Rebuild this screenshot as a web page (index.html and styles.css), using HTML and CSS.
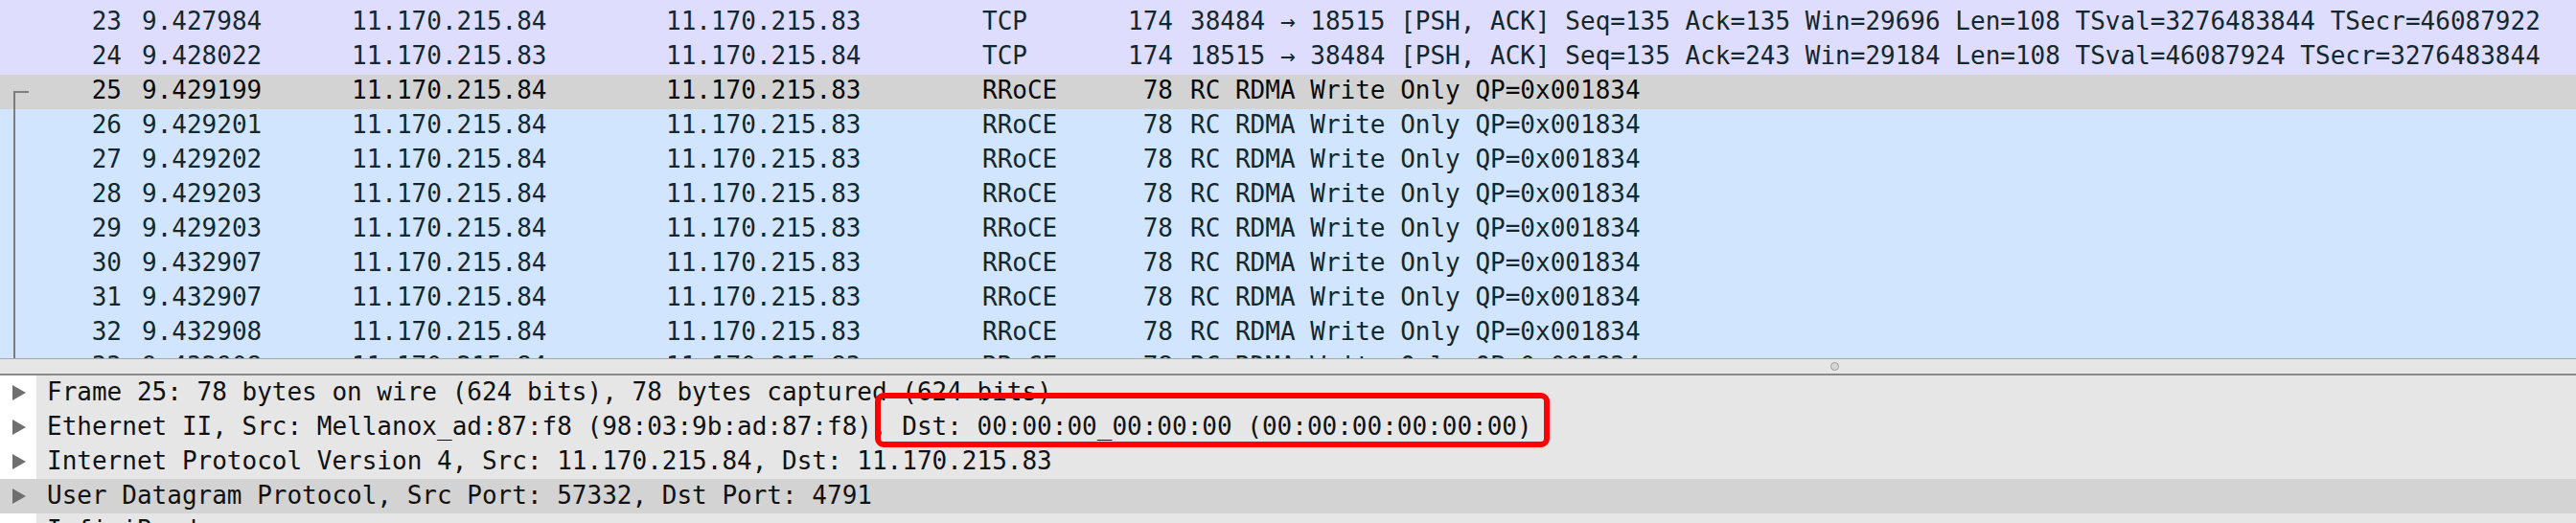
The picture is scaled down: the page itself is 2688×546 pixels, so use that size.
FILE: index.html
```html
<!DOCTYPE html>
<html>
<head>
<meta charset="utf-8">
<link rel="stylesheet" href="styles.css">
</head>
<body>
<div class="app">
  <div class="packet-list">
    <div class="tree-line"></div>
    <div class="row tcp spacer"></div>
    <div class="row tcp"><span class="c-no">23</span><span class="c-time">9.427984</span><span class="c-src">11.170.215.84</span><span class="c-dst">11.170.215.83</span><span class="c-proto">TCP</span><span class="c-len">174</span><span class="c-info">38484 → 18515 [PSH, ACK] Seq=135 Ack=135 Win=29696 Len=108 TSval=3276483844 TSecr=46087922</span></div>
    <div class="row tcp"><span class="c-no">24</span><span class="c-time">9.428022</span><span class="c-src">11.170.215.83</span><span class="c-dst">11.170.215.84</span><span class="c-proto">TCP</span><span class="c-len">174</span><span class="c-info">18515 → 38484 [PSH, ACK] Seq=135 Ack=243 Win=29184 Len=108 TSval=46087924 TSecr=3276483844</span></div>
    <div class="row selected"><span class="c-no">25</span><span class="c-time">9.429199</span><span class="c-src">11.170.215.84</span><span class="c-dst">11.170.215.83</span><span class="c-proto">RRoCE</span><span class="c-len">78</span><span class="c-info">RC RDMA Write Only QP=0x001834</span></div>
    <div class="row roce"><span class="c-no">26</span><span class="c-time">9.429201</span><span class="c-src">11.170.215.84</span><span class="c-dst">11.170.215.83</span><span class="c-proto">RRoCE</span><span class="c-len">78</span><span class="c-info">RC RDMA Write Only QP=0x001834</span></div>
    <div class="row roce"><span class="c-no">27</span><span class="c-time">9.429202</span><span class="c-src">11.170.215.84</span><span class="c-dst">11.170.215.83</span><span class="c-proto">RRoCE</span><span class="c-len">78</span><span class="c-info">RC RDMA Write Only QP=0x001834</span></div>
    <div class="row roce"><span class="c-no">28</span><span class="c-time">9.429203</span><span class="c-src">11.170.215.84</span><span class="c-dst">11.170.215.83</span><span class="c-proto">RRoCE</span><span class="c-len">78</span><span class="c-info">RC RDMA Write Only QP=0x001834</span></div>
    <div class="row roce"><span class="c-no">29</span><span class="c-time">9.429203</span><span class="c-src">11.170.215.84</span><span class="c-dst">11.170.215.83</span><span class="c-proto">RRoCE</span><span class="c-len">78</span><span class="c-info">RC RDMA Write Only QP=0x001834</span></div>
    <div class="row roce"><span class="c-no">30</span><span class="c-time">9.432907</span><span class="c-src">11.170.215.84</span><span class="c-dst">11.170.215.83</span><span class="c-proto">RRoCE</span><span class="c-len">78</span><span class="c-info">RC RDMA Write Only QP=0x001834</span></div>
    <div class="row roce"><span class="c-no">31</span><span class="c-time">9.432907</span><span class="c-src">11.170.215.84</span><span class="c-dst">11.170.215.83</span><span class="c-proto">RRoCE</span><span class="c-len">78</span><span class="c-info">RC RDMA Write Only QP=0x001834</span></div>
    <div class="row roce"><span class="c-no">32</span><span class="c-time">9.432908</span><span class="c-src">11.170.215.84</span><span class="c-dst">11.170.215.83</span><span class="c-proto">RRoCE</span><span class="c-len">78</span><span class="c-info">RC RDMA Write Only QP=0x001834</span></div>
    <div class="row roce"><span class="c-no">33</span><span class="c-time">9.432908</span><span class="c-src">11.170.215.84</span><span class="c-dst">11.170.215.83</span><span class="c-proto">RRoCE</span><span class="c-len">78</span><span class="c-info">RC RDMA Write Only QP=0x001834</span></div>
  </div>
  <div class="splitter"><span class="handle"></span></div>
  <div class="details">
    <div class="drow"><span class="exp"><svg width="16" height="18" viewBox="0 0 16 18"><polygon points="1,1 15,9 1,17" fill="#6f6f6f"/></svg></span><span class="dtext">Frame 25: 78 bytes on wire (624 bits), 78 bytes captured (624 bits)</span></div>
    <div class="drow"><span class="exp"><svg width="16" height="18" viewBox="0 0 16 18"><polygon points="1,1 15,9 1,17" fill="#6f6f6f"/></svg></span><span class="dtext">Ethernet II, Src: Mellanox_ad:87:f8 (98:03:9b:ad:87:f8), Dst: 00:00:00_00:00:00 (00:00:00:00:00:00)</span></div>
    <div class="drow"><span class="exp"><svg width="16" height="18" viewBox="0 0 16 18"><polygon points="1,1 15,9 1,17" fill="#6f6f6f"/></svg></span><span class="dtext">Internet Protocol Version 4, Src: 11.170.215.84, Dst: 11.170.215.83</span></div>
    <div class="drow hl"><span class="exp"><svg width="16" height="18" viewBox="0 0 16 18"><polygon points="1,1 15,9 1,17" fill="#6f6f6f"/></svg></span><span class="dtext">User Datagram Protocol, Src Port: 57332, Dst Port: 4791</span></div>
    <div class="drow"><span class="exp"><svg width="16" height="18" viewBox="0 0 16 18"><polygon points="1,1 15,9 1,17" fill="#6f6f6f"/></svg></span><span class="dtext">InfiniBand</span></div>
    <div class="annot"></div>
  </div>
</div>
</body>
</html>
```

FILE: styles.css
```css
html, body {
  margin: 0;
  padding: 0;
  background: #e6e6e6;
}
.app {
  width: 2688px;
  height: 546px;
  overflow: hidden;
  font-family: "DejaVu Sans Mono", "Liberation Mono", monospace;
  font-size: 26px;
}
.packet-list {
  position: relative;
  height: 374px;
  overflow: hidden;
  background: #ffffff;
}
.tree-line {
  position: absolute;
  left: 14px;
  top: 95px;
  width: 14px;
  height: 300px;
  border-left: 2px solid #7d7d7d;
  border-top: 2px solid #7d7d7d;
}
.row {
  display: grid;
  grid-template-columns: 127px 240px 328px 330px 135px 64px 1fr;
  height: 36px;
  line-height: 33px;
  color: #12272e;
  white-space: pre;
}
.row.spacer { height: 6px; }
.row.tcp { background: #dfddfd; }
.row.roce { background: #d1e6fe; }
.row.selected { background: #d3d3d3; color: #0a0a0a; }
.c-no { text-align: right; }
.c-time { padding-left: 21px; }
.c-len { text-align: right; }
.c-info { padding-left: 18px; }
.splitter {
  position: relative;
  height: 15px;
  border-top: 1px solid #a8a8a8;
  border-bottom: 2px solid #8a8a8a;
  background: #e6e6e6;
}
.handle {
  position: absolute;
  left: 1910px;
  top: 3px;
  width: 7px;
  height: 7px;
  border-radius: 50%;
  border: 1px solid #9a9a9a;
  background: #d6d6d6;
}
.details {
  position: relative;
  background: #e6e6e6;
}
.drow {
  display: flex;
  height: 36px;
  line-height: 34px;
  color: #111111;
  white-space: pre;
}
.drow .exp {
  width: 38px;
  flex: none;
  display: flex;
  align-items: center;
  padding-left: 12px;
  box-sizing: border-box;
  background: #ffffff;
}
.drow .dtext { padding-left: 11px; }
.drow.hl { background: #d3d3d3; }
.drow.hl .exp { background: #d3d3d3; }
.annot {
  position: absolute;
  left: 913px;
  top: 18px;
  width: 704px;
  height: 57px;
  box-sizing: border-box;
  border: 6px solid #ff0000;
  border-radius: 9px;
}
```
